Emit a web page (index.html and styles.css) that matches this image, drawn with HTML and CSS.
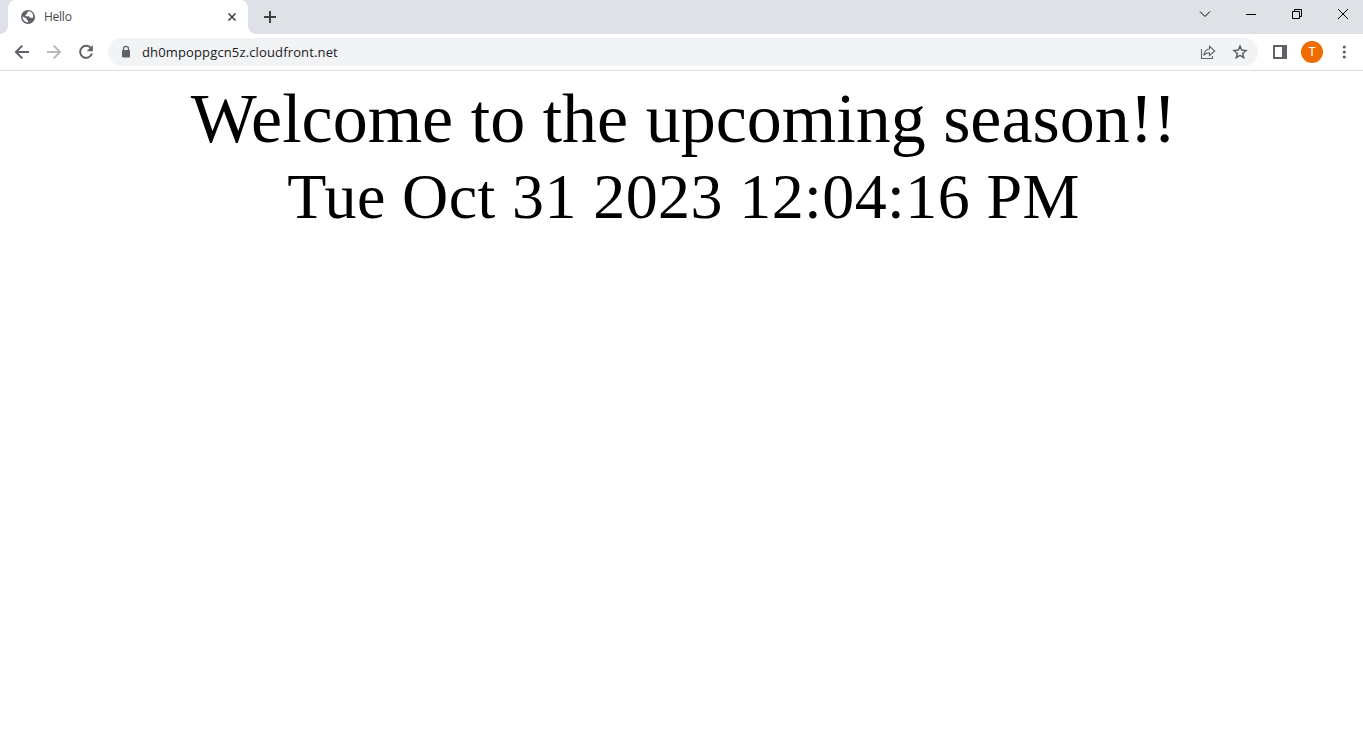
FILE: index.html
```html
<!DOCTYPE html>
<html lang="en">
<head>
<meta charset="utf-8">
<title>Hello</title>
<link rel="stylesheet" href="styles.css">
</head>
<body>
<header class="browser">
  <div class="tabstrip">
    <div class="tab">
      <svg class="globe" width="16" height="16" viewBox="0 0 16 16"><circle cx="8" cy="8" r="7" fill="#5f6368"/><path d="M8.800 2.200 7.200 3.300v1.500L5.500 6v1.200h3.200l1.600 1.600h2.500c1.300-3-.7-6.400-4-6.600ZM2.400 7.600c0 3.300 2.500 5.700 5.600 5.800V11.800L6.600 10.800V9.600Z" fill="#fff"/></svg>
      <span class="tab-title">Hello</span>
      <svg class="tab-close" width="16" height="16" viewBox="0 0 16 16"><path d="m4.500 4.500 7 7m0-7-7 7" stroke="#3c4043" stroke-width="1.600"/></svg>
    </div>
    <svg class="new-tab" width="16" height="16" viewBox="0 0 16 16"><path d="M2 8h12M8 2v12" stroke="#3c4043" stroke-width="2"/></svg>
    <div class="window-controls">
      <svg width="46" height="28" viewBox="0 0 46 28"><path d="m18 11.500 5 5 5-5"/></svg>
      <svg width="46" height="28" viewBox="0 0 46 28"><path d="M18 14.500h10"/></svg>
      <svg width="46" height="28" viewBox="0 0 46 28"><path d="M18.500 11.500h7v7h-7zM20.500 11.500v-2h7v7h-2"/></svg>
      <svg width="46" height="28" viewBox="0 0 46 28"><path d="m18 9 10 10m0-10L18 19"/></svg>
    </div>
  </div>
  <div class="toolbar">
    <svg class="nav" width="20" height="20" viewBox="0 0 20 20"><path d="M17 10H4M10.300 3.600 3.900 10l6.400 6.400" stroke="#5f6368"/></svg>
    <svg class="nav" width="20" height="20" viewBox="0 0 20 20"><path d="M3 10h13M9.700 3.600l6.400 6.400-6.400 6.400" stroke="#bababc"/></svg>
    <svg class="nav" width="20" height="20" viewBox="0 0 20 20"><path d="M15 6.300A6 6 0 1 0 15.900 11.500" stroke="#5f6368"/><path d="M16.900 3v6.200h-6.200z" fill="#5f6368"/></svg>
    <div class="address">
      <svg class="lock" width="12" height="14" viewBox="0 0 12 14"><path d="M3.500 6V3.800a2.500 2.500 0 0 1 5 0V6" fill="none" stroke="#5f6368" stroke-width="1.300"/><rect x="2" y="5" width="8" height="7.500" rx="1" fill="#5f6368"/></svg>
      <span class="url">dh0mpoppgcn5z.cloudfront.net</span>
      <svg class="share" width="16" height="16" viewBox="0 0 16 16"><path d="M1.500 5v9.500h11V12M9.500 5V2.200L14.700 7 9.500 11.500V8.700C6.500 8.700 5 9.600 3.800 11.500 4.300 8 6 5.300 9.500 5Z" fill="none" stroke="#5f6368" stroke-width="1.100"/></svg>
      <svg class="star" width="16" height="16" viewBox="0 0 16 16"><path d="m8 2.100 1.700 4 4.300.4-3.300 2.900 1 4.200L8 11.400l-3.700 2.200 1-4.200L2 6.500l4.300-.4Z" fill="none" stroke="#5f6368" stroke-width="1.500"/></svg>
    </div>
    <svg class="panel" width="14" height="14" viewBox="0 0 14 14"><path fill-rule="evenodd" d="M0 0h14v14H0ZM2 2v10h7V2Z" fill="#5f6368"/></svg>
    <div class="avatar">T</div>
    <svg class="menu" width="4" height="16" viewBox="0 0 4 16" fill="#5f6368"><circle cx="2.300" cy="3" r="1.600"/><circle cx="2.300" cy="8" r="1.600"/><circle cx="2.300" cy="13" r="1.600"/></svg>
  </div>
</header>
<main class="page">
  <div class="welcome">Welcome to the upcoming season!!</div>
  <div class="clock">Tue Oct 31 2023 12:04:16 PM</div>
</main>
</body>
</html>
```
FILE: styles.css
```css
body { margin: 0; background: #fff; overflow: hidden; }
svg { display: block; flex: none; }
.browser { font-family: "Open Sans", "Noto Sans", sans-serif; }
.tabstrip { display: flex; align-items: center; height: 34px; padding-left: 8px; background: #dee1e6; }
.tab { position: relative; box-sizing: border-box; display: flex; align-items: center; width: 240px; height: 34px; padding: 0 8px 0 12px; border-radius: 8px 8px 0 0; background: #fff; }
.tab::before, .tab::after { content: ""; position: absolute; bottom: 0; width: 8px; height: 8px; }
.tab::before { left: -8px; background: radial-gradient(circle at 0 0, transparent 7.500px, #fff 8px); }
.tab::after { right: -8px; background: radial-gradient(circle at 100% 0, transparent 7.500px, #fff 8px); }
.tab-title { flex: 1; margin-left: 8px; font-size: 12px; line-height: 16px; letter-spacing: -0.25px; color: #45494d; }
.new-tab { margin-left: 14px; }
.window-controls { display: flex; align-self: flex-start; margin-left: auto; margin-right: -3px; }
.window-controls path { fill: none; stroke: #000; stroke-width: 1; }
.toolbar { box-sizing: border-box; display: flex; align-items: center; height: 37px; padding: 0 17px 0 12px; border-bottom: 1px solid #dadce0; background: #fff; }
.nav { margin-right: 12px; }
.nav path { stroke-width: 2; fill: none; }
.nav path[fill] { fill: #5f6368; }
.address { display: flex; align-items: center; box-sizing: border-box; width: 1150px; height: 28px; padding: 0 10px 0 12px; border-radius: 14px; background: #f1f3f4; }
.url { flex: 1; margin-left: 10px; font-size: 13px; line-height: 18px; letter-spacing: 0.14px; color: #202124; }
.star { margin-left: 16px; }
.panel { margin-left: 15px; }
.avatar { width: 22px; height: 22px; margin-left: 14px; border-radius: 50%; background: #ef6c00; color: #fff; font: 12px/22px Roboto, sans-serif; text-align: center; }
.menu { margin-left: auto; }
.page { padding: 8px 0 0 4px; font-family: "Liberation Serif", "Times New Roman", serif; text-align: center; color: #000; white-space: nowrap; }
.welcome { font-size: 70px; line-height: 80px; }
.clock { font-size: 64px; line-height: 76px; letter-spacing: 0.4px; }
```
